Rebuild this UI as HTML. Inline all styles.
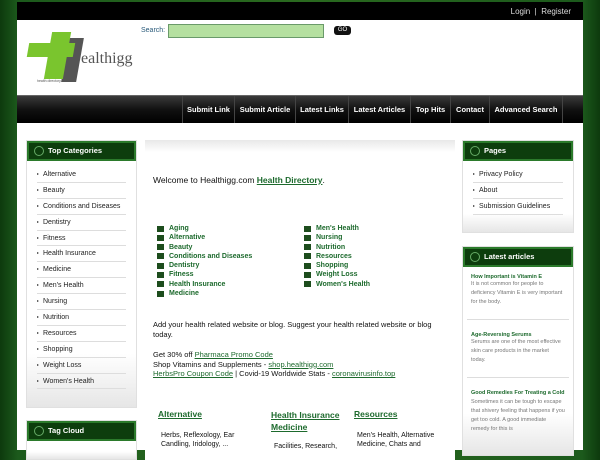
<!DOCTYPE html>
<html><head><meta charset="utf-8"><style>
*{margin:0;padding:0;box-sizing:border-box}
body{width:600px;height:450px;overflow:hidden;background:linear-gradient(90deg,#0d3a0d 0,#1c5a1c 3%,#2a6a1f 50%,#1c5a1c 97%,#0d3a0d 100%);font-family:"Liberation Sans",sans-serif;position:relative}
.a{position:absolute}
.top{left:17px;top:2px;width:566px;height:18px;background:#000;color:#ddd;font-size:8px;text-align:right;padding:5px 12px 0 0}
.hdr{left:17px;top:20px;width:566px;height:75px;background:#fff}
.nav{left:17px;top:95px;width:566px;height:28px;background:linear-gradient(#3a3a3a,#111 50%,#000);border-top:1px solid #666}
.nav span{position:absolute;top:0;height:27px;line-height:27px;color:#fff;font-size:7.5px;font-weight:bold;border-left:1px solid #444;text-align:center}
.main{left:17px;top:123px;width:566px;height:327px;background:#fff}
.box{background:linear-gradient(#fff 80%,#e6e6e6);border:1px solid #e0e0e0}
.bh{height:20px;background:#0d3d0d;border:2px solid #2b7a2b;color:#fff;font-size:7.5px;font-weight:bold;line-height:16px;padding-left:19px;position:relative}
.bh:before{content:"";position:absolute;left:5px;top:3px;width:8px;height:8px;border:1px solid #6a6;border-radius:50%}
.li{font-size:7px;color:#222;height:15.9px;line-height:15px;border-bottom:1px solid #ddd;margin:0 10px 0 10px;padding-left:6px;position:relative}
.li:before{content:"";position:absolute;left:0;top:6px;border-left:2px solid #333;border-top:1.5px solid transparent;border-bottom:1.5px solid transparent}
.g{color:#1d6a2d;font-weight:bold;font-size:7px;line-height:9.3px;padding-left:12px;position:relative}
.g:before{content:"";position:absolute;left:0;top:1.5px;width:7px;height:6px;background:#1d4d1d}
a{color:#1d6a2d;text-decoration:underline}
.t{font-size:7.5px;color:#111}
.ah{font-size:5.5px;color:#1d6a2d;font-weight:bold}
.at{font-size:5.5px;color:#777;line-height:9px}
</style></head><body>
<div class="a top">Login &nbsp;|&nbsp; Register</div>
<div class="a hdr">
 <div class="a" style="left:48px;top:18px;width:15px;height:44px;background:#555;transform:skewX(-10deg)"></div>
 <div class="a" style="left:31px;top:12px;width:19px;height:47px;background:#7ac52e;transform:skewX(-10deg)"></div>
 <div class="a" style="left:11px;top:23px;width:46px;height:14px;background:#7ac52e;transform:skewX(-10deg)"></div>
 <div class="a" style="left:64px;top:30px;font-family:'Liberation Serif',serif;font-size:16px;color:#555">ealthigg</div>
 <div class="a" style="left:20px;top:59px;font-size:3.5px;color:#555">health directory</div>
 <div class="a" style="left:124px;top:7px;font-size:7px;color:#2a5a7a">Search:</div>
 <div class="a" style="left:151px;top:4px;width:156px;height:14px;background:#b5e0a0;border:1px solid #6a9a6a"></div>
 <div class="a" style="left:317px;top:6px;width:17px;height:9px;background:#111;border-radius:3px;color:#fff;font-size:6px;text-align:center;line-height:9px">GO</div>
</div>
<div class="a nav">
 <span style="left:165px;width:52px">Submit Link</span>
 <span style="left:217px;width:61px">Submit Article</span>
 <span style="left:278px;width:53px">Latest Links</span>
 <span style="left:331px;width:62px">Latest Articles</span>
 <span style="left:393px;width:40px">Top Hits</span>
 <span style="left:433px;width:39px">Contact</span>
 <span style="left:472px;width:74px;border-right:1px solid #444">Advanced Search</span>
</div>
<div class="a main"></div>
<div class="a box" style="left:26px;top:140px;width:111px;height:268px">
 <div class="bh">Top Categories</div>
 <div style="padding-top:6px">
 <div class="li">Alternative</div><div class="li">Beauty</div><div class="li">Conditions and Diseases</div><div class="li">Dentistry</div><div class="li">Fitness</div><div class="li">Health Insurance</div><div class="li">Medicine</div><div class="li">Men's Health</div><div class="li">Nursing</div><div class="li">Nutrition</div><div class="li">Resources</div><div class="li">Shopping</div><div class="li">Weight Loss</div><div class="li">Women's Health</div>
 </div>
</div>
<div class="a box" style="left:26px;top:420px;width:111px;height:40px"><div class="bh">Tag Cloud</div></div>
<div class="a" style="left:145px;top:140px;width:310px;height:320px;background:linear-gradient(#e8e8e8,#fff 12px)"></div>
<div class="a t" style="left:153px;top:175px;font-size:8.5px">Welcome to Healthigg.com <a style="font-weight:bold">Health Directory</a>.</div>
<div class="a" style="left:157px;top:224px">
<div class="g">Aging</div><div class="g">Alternative</div><div class="g">Beauty</div><div class="g">Conditions and Diseases</div><div class="g">Dentistry</div><div class="g">Fitness</div><div class="g">Health Insurance</div><div class="g">Medicine</div></div>
<div class="a" style="left:304px;top:224px">
<div class="g">Men's Health</div><div class="g">Nursing</div><div class="g">Nutrition</div><div class="g">Resources</div><div class="g">Shopping</div><div class="g">Weight Loss</div><div class="g">Women's Health</div></div>
<div class="a t" style="left:153px;top:320px;width:300px;line-height:10px">Add your health related website or blog. Suggest your health related website or blog today.</div>
<div class="a t" style="left:153px;top:350px;line-height:9.7px">Get 30% off <a>Pharmaca Promo Code</a><br>Shop Vitamins and Supplements - <a>shop.healthigg.com</a><br><a>HerbsPro Coupon Code</a> | Covid-19 Worldwide Stats - <a>coronavirusinfo.top</a></div>
<div class="a" style="left:158px;top:409px;font-size:8.5px;font-weight:bold"><a>Alternative</a></div>
<div class="a" style="left:271px;top:409px;font-size:8.5px;font-weight:bold;line-height:12px;width:80px"><a>Health Insurance Medicine</a></div>
<div class="a" style="left:354px;top:409px;font-size:8.5px;font-weight:bold"><a>Resources</a></div>
<div class="a t" style="left:161px;top:431px;font-size:7px;line-height:9px;width:95px">Herbs, Reflexology, Ear Candling, Iridology, ...</div>
<div class="a t" style="left:274px;top:443px;font-size:7px">Facilities, Research,</div>
<div class="a t" style="left:357px;top:431px;font-size:7px;line-height:9px;width:95px">Men's Health, Alternative Medicine, Chats and</div>
<div class="a box" style="left:462px;top:140px;width:112px;height:93px">
 <div class="bh">Pages</div>
 <div style="padding-top:6px"><div class="li">Privacy Policy</div><div class="li">About</div><div class="li">Submission Guidelines</div></div>
</div>
<div class="a box" style="left:462px;top:246px;width:112px;height:210px">
 <div class="bh">Latest articles</div>
 <div style="padding:7px 8px 0 8px">
  <div class="ah">How Important is Vitamin E</div><div class="at">It is not common for people to deficiency Vitamin E is very important for the body.</div>
  <div style="border-top:1px solid #ddd;margin:12px -4px 12px"></div>
  <div class="ah">Age-Reversing Serums</div><div class="at">Serums are one of the most effective skin care products in the market today.</div>
  <div style="border-top:1px solid #ddd;margin:12px -4px 11px"></div>
  <div class="ah" style="line-height:9px">Good Remedies For Treating a Cold</div><div class="at">Sometimes it can be tough to escape that shivery feeling that happens if you get too cold. A good immediate remedy for this is</div>
 </div>
</div>
</body></html>
